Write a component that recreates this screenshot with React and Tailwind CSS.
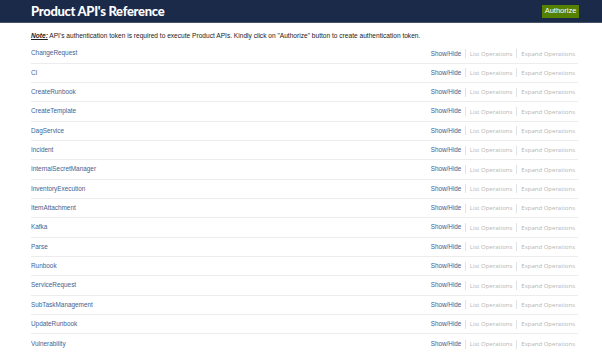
import React from "react";

const items = [
  "ChangeRequest",
  "CI",
  "CreateRunbook",
  "CreateTemplate",
  "DagService",
  "Incident",
  "InternalSecretManager",
  "InventoryExecution",
  "ItemAttachment",
  "Kafka",
  "Parse",
  "Runbook",
  "ServiceRequest",
  "SubTaskManagement",
  "UpdateRunbook",
  "Vulnerability",
];

export default function App() {
  return (
    <div className="w-[602px] h-[362px] bg-white overflow-hidden" style={{ fontFamily: '"Liberation Sans", Arial, sans-serif' }}>
      <div className="h-[23px] bg-[#1b2a49] border-b border-[#44516a] flex items-center justify-between pl-[31px] pr-[23px]">
        <div className="text-white font-black text-[13px] tracking-[-0.3px] leading-none" style={{ fontFamily: 'Lato, sans-serif' }}>
          Product API's Reference
        </div>
        <div className="bg-[#558000] text-white text-[7.5px] h-[13px] w-[37px] flex items-center justify-center leading-none">
          Authorize
        </div>
      </div>
      <div className="pl-[31px] pr-[24px] pt-[8px]">
        <div className="text-[6.6px] text-[#222] leading-[10px] h-[10px]">
          <span className="font-bold italic underline">Note:</span> API's authentication token is required to execute Product APIs. Kindly click on "Authorize" button to create authentication token.
        </div>
        <div className="mt-[3.5px]">
          {items.map((name, i) => (
            <div
              key={name}
              className={`h-[19.33px] flex items-center justify-between ${i < items.length - 1 ? "border-b border-[#ececec]" : ""}`}
            >
              <span className="text-[6.4px] text-[#45618f] leading-none">{name}</span>
              <div className="flex items-center leading-none pr-[3px]">
                <span className="text-[#3f5c8c] text-[6.3px]">Show/Hide</span>
                <span className="mx-[3.75px] h-[9px] w-px bg-[#e2e2e2]"></span>
                <span className="text-[#b5b5b5] text-[6px]" style={{ fontFamily: '"Open Sans", sans-serif' }}>List Operations</span>
                <span className="mx-[4px] h-[9px] w-px bg-[#e2e2e2]"></span>
                <span className="text-[#b5b5b5] text-[6px]" style={{ fontFamily: '"Open Sans", sans-serif' }}>Expand Operations</span>
              </div>
            </div>
          ))}
        </div>
      </div>
    </div>
  );
}
